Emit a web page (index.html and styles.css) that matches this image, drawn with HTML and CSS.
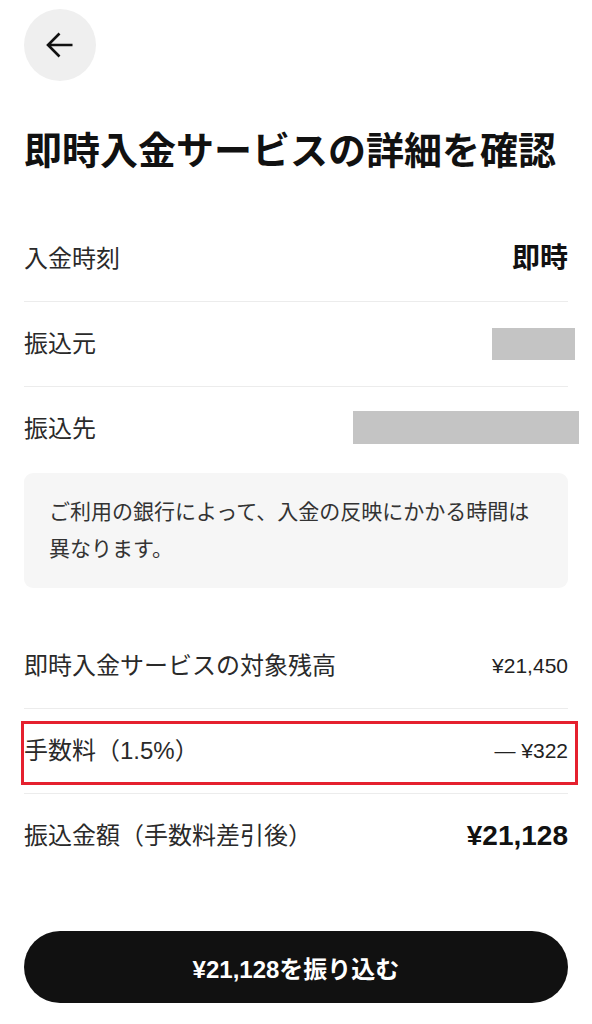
FILE: index.html
```html
<!DOCTYPE html>
<html lang="ja">
<head>
<meta charset="utf-8">
<title>即時入金サービスの詳細を確認</title>
<link rel="stylesheet" href="styles.css">
</head>
<body>
<main class="page">
  <header class="header">
    <button class="back" aria-label="戻る">
      <svg class="back-icon" viewBox="0 0 28 28" width="28" height="28" aria-hidden="true">
        <path d="M26.5 14H2.5M13.5 2.5L2 14L13.5 25.5" fill="none" stroke="#111" stroke-width="2.6"/>
      </svg>
    </button>
  </header>

  <h1 class="title">即時入金サービスの詳細を確認</h1>

  <section class="list list-top">
    <div class="row">
      <span class="label">入金時刻</span>
      <span class="value value-strong">即時</span>
    </div>
    <div class="row">
      <span class="label">振込元</span>
      <span class="redact redact-short"></span>
    </div>
    <div class="row row-last">
      <span class="label">振込先</span>
      <span class="redact redact-long"></span>
    </div>
  </section>

  <div class="notice">ご利用の銀行によって、入金の反映にかかる時間は異なります。</div>

  <section class="list list-bottom">
    <div class="row">
      <span class="label">即時入金サービスの対象残高</span>
      <span class="value">¥21,450</span>
    </div>
    <div class="row row-fee">
      <span class="label">手数料（1.5%）</span>
      <span class="value">— ¥322</span>
      <span class="highlight" aria-hidden="true"></span>
    </div>
    <div class="row row-last">
      <span class="label">振込金額（手数料差引後）</span>
      <span class="value value-strong">¥21,128</span>
    </div>
  </section>

  <button class="submit">¥21,128を振り込む</button>
</main>
</body>
</html>
```

FILE: styles.css
```css
* {
  box-sizing: border-box;
}

html, body {
  margin: 0;
  padding: 0;
  background: #ffffff;
}

body {
  font-family: "Liberation Sans", "Noto Sans CJK JP", sans-serif;
  color: #111111;
}

.page {
  width: 592px;
  padding: 0 24px;
}

.header {
  padding-top: 9px;
  display: flex;
}

.back {
  width: 72px;
  height: 72px;
  border-radius: 50%;
  border: none;
  background: #efefef;
  padding: 0;
  display: flex;
  align-items: center;
  justify-content: center;
}

.back-icon {
  display: block;
}

.title {
  margin: 47px 0 0;
  font-size: 38px;
  line-height: 46px;
  font-weight: 700;
  color: #111111;
  white-space: nowrap;
  letter-spacing: 0;
}

.list-top {
  margin-top: 43px;
}

.list-bottom {
  margin-top: 36px;
}

.row {
  position: relative;
  display: flex;
  align-items: center;
  justify-content: space-between;
  height: 85px;
  border-bottom: 1px solid #ececec;
}

.row-last {
  height: 84px;
  border-bottom: none;
}

.label {
  font-size: 24px;
  line-height: 24px;
  color: #2a2a2a;
  white-space: nowrap;
}

.value {
  font-size: 21px;
  line-height: 24px;
  color: #222222;
  white-space: nowrap;
}

.value-strong {
  font-size: 28px;
  line-height: 28px;
  font-weight: 700;
  color: #111111;
}

.redact {
  display: block;
  background: #c4c4c4;
}

.redact-short {
  width: 83px;
  height: 32px;
  margin-right: -7px;
}

.redact-long {
  width: 226px;
  height: 33px;
  margin-right: -11px;
  margin-top: -3px;
}

.notice {
  margin-top: 2px;
  background: #f6f6f6;
  border-radius: 9px;
  padding: 20px 24px 21px 25px;
  font-size: 21px;
  line-height: 37px;
  color: #333333;
}

.highlight {
  position: absolute;
  left: -3px;
  right: -10px;
  top: 12px;
  height: 64px;
  border: 3px solid #e5202e;
  pointer-events: none;
}

.submit {
  display: flex;
  align-items: center;
  justify-content: center;
  width: 100%;
  height: 72px;
  margin-top: 53px;
  border: none;
  border-radius: 36px;
  background: #111111;
  color: #ffffff;
  font-family: "Liberation Sans", "Noto Sans CJK JP", sans-serif;
  font-size: 24px;
  font-weight: 700;
  padding: 0;
}
```
